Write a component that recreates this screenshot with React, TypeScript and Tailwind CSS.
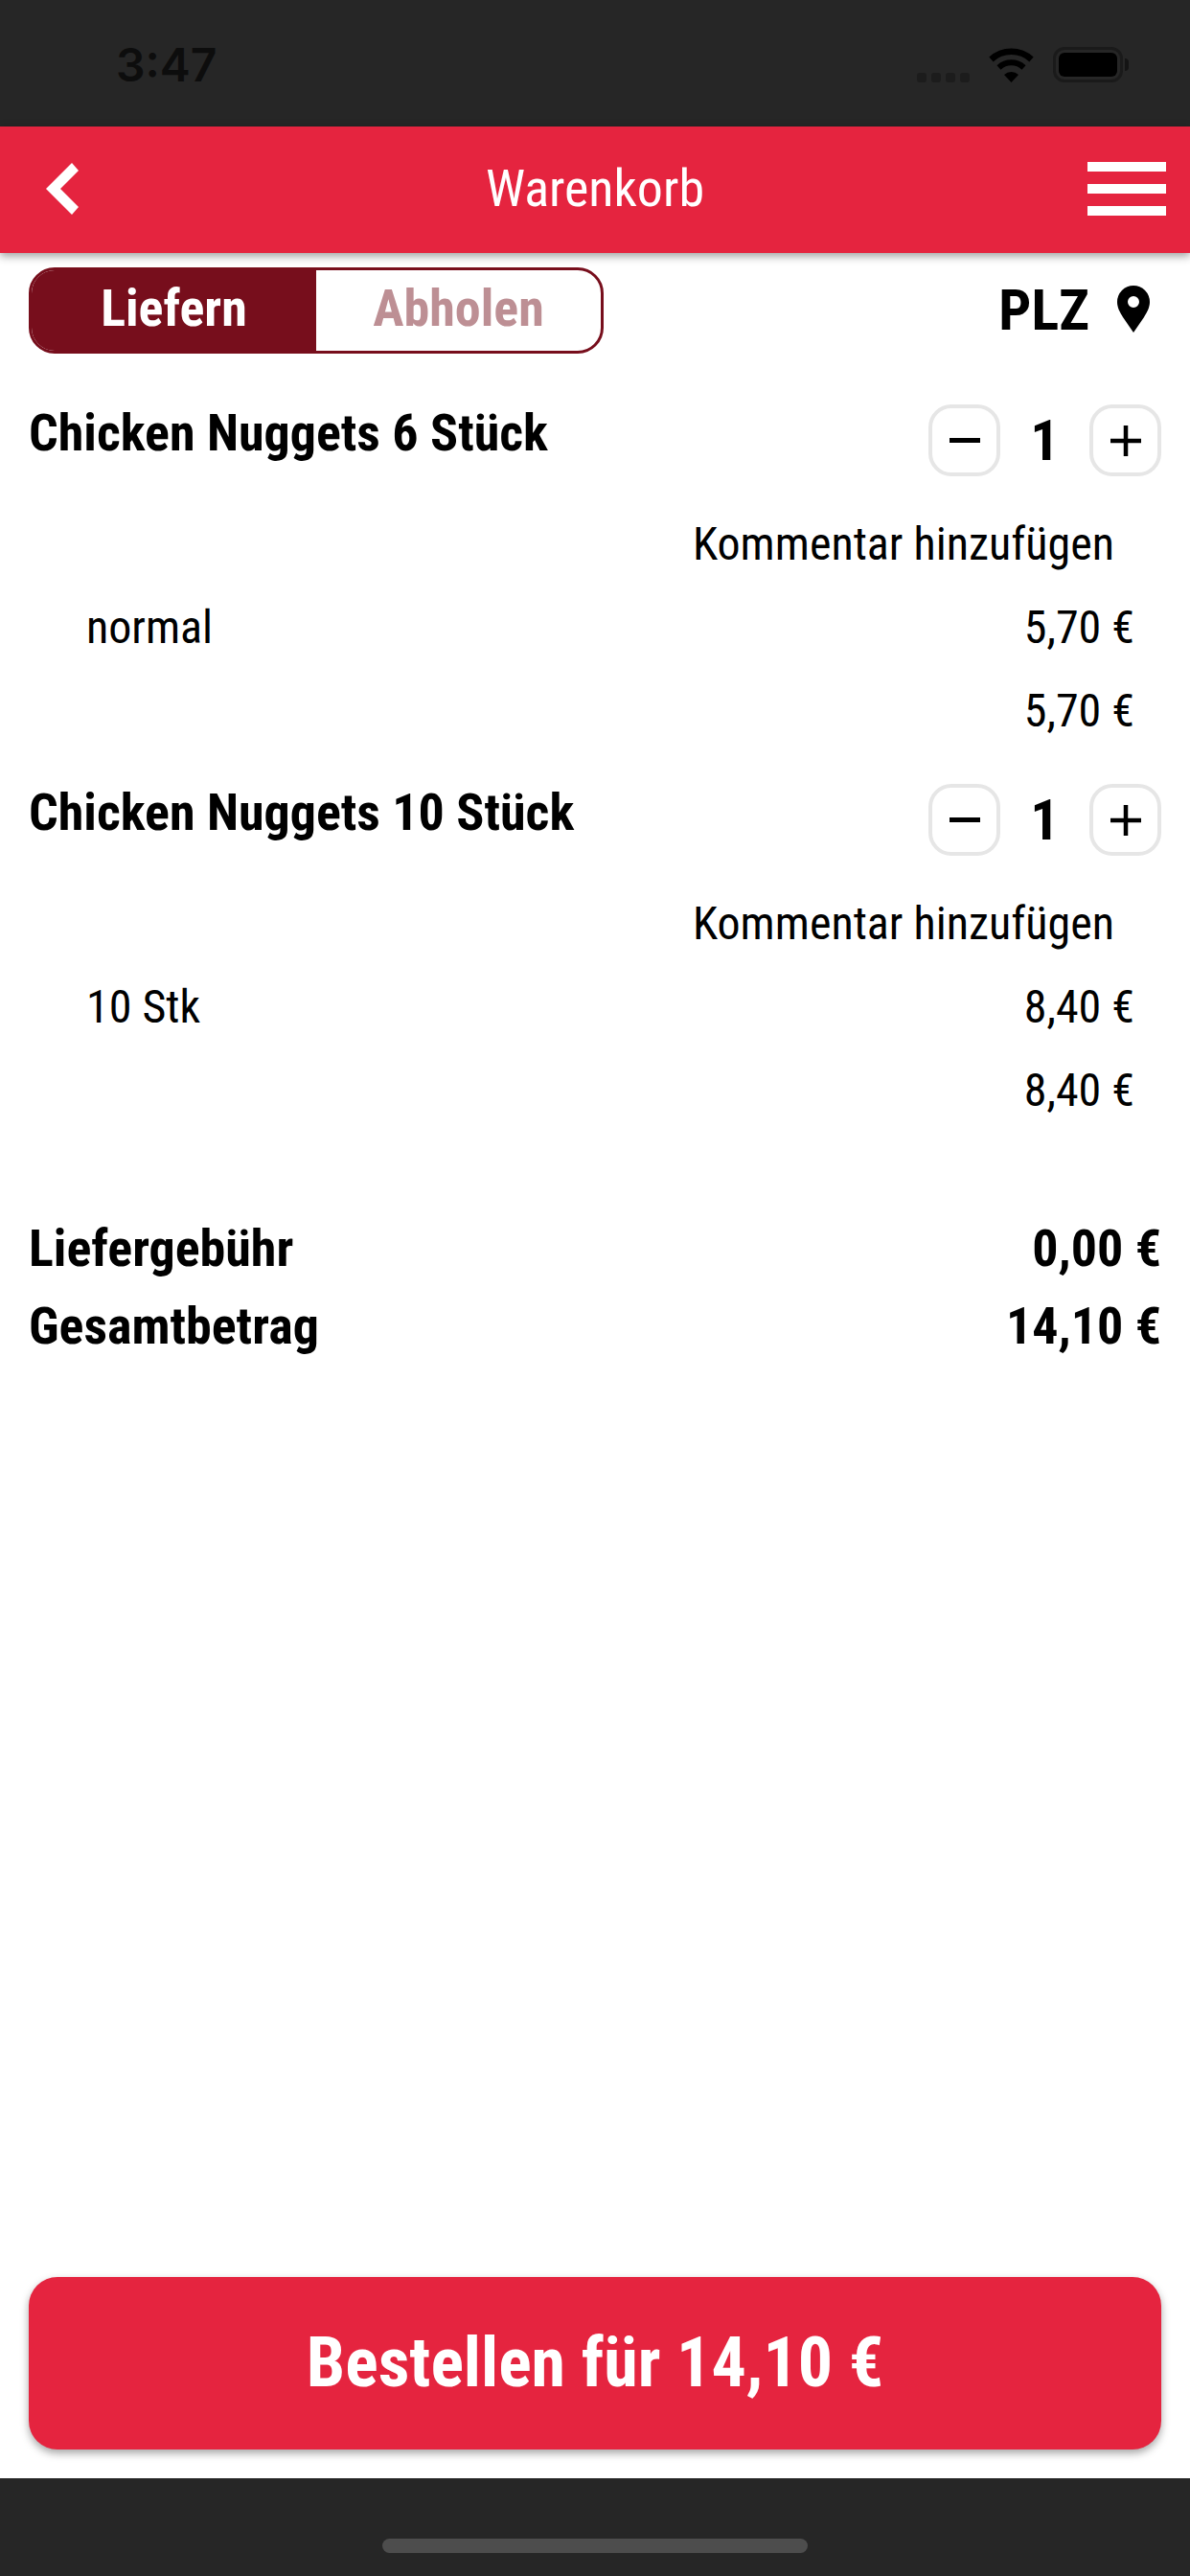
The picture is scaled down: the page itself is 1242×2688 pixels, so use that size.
const font = { fontFamily: '"Roboto", "Liberation Sans", sans-serif', fontStretch: '75%' };

function Stepper() {
  return (
    <div className="flex items-center">
      <button className="w-[75px] h-[75px] rounded-[24px] border-[4px] border-[#e6e6e6] flex items-center justify-center">
        <span className="w-[32px] h-[5px] bg-black" />
      </button>
      <span className="w-[93px] text-center text-[60px] leading-none font-bold">1</span>
      <button className="w-[75px] h-[75px] rounded-[24px] border-[4px] border-[#e6e6e6] flex items-center justify-center">
        <svg width="32" height="32" viewBox="0 0 32 32"><path d="M0 16h32M16 0v32" stroke="#000" strokeWidth="4.5" /></svg>
      </button>
    </div>
  );
}

function CartItem({ name, variant, price }: { name: string; variant: string; price: string }) {
  return (
    <div className="mb-[33px]">
      <div className="flex items-start justify-between px-[30px] h-[75px]">
        <h2 className="text-[54px] font-bold leading-[60px]">{name}</h2>
        <Stepper />
      </div>
      <div className="flex flex-col text-[48px] leading-[87px] pr-[58px] mt-[27px]">
        <div className="text-right pr-[21px]">Kommentar hinzufügen</div>
        <div className="flex justify-between pl-[90px]">
          <span>{variant}</span>
          <span>{price}</span>
        </div>
        <div className="text-right">{price}</div>
      </div>
    </div>
  );
}

export default function App() {
  return (
    <div className="w-[1242px] h-[2688px] flex flex-col bg-white text-black overflow-hidden" style={font}>
      {/* status bar */}
      <div className="h-[132px] bg-[#262626] flex items-start justify-between pl-[121px] pr-[64px] pt-[40px] shrink-0">
        <span className="text-[48px] leading-[56px] font-semibold text-[#0d0d0d]" style={{ fontFamily: 'Inter, sans-serif', fontStretch: '100%' }}>3:47</span>
        <div className="flex items-center mt-[9px]">
          <div className="flex gap-[5px] mt-[26px] mr-[20px]">
            <span className="w-[10px] h-[10px] rounded-[3px] bg-[#1c1c1c]" />
            <span className="w-[10px] h-[10px] rounded-[3px] bg-[#1c1c1c]" />
            <span className="w-[10px] h-[10px] rounded-[3px] bg-[#1c1c1c]" />
            <span className="w-[10px] h-[10px] rounded-[3px] bg-[#1c1c1c]" />
          </div>
          <svg width="47" height="36" viewBox="0 0 47 36" className="mr-[20px]">
            <path d="M23.5 36 L16 28 A11 11 0 0 1 31 28 Z" fill="#000" />
            <path d="M10.5 20.5 A19 19 0 0 1 36.5 20.5" fill="none" stroke="#000" strokeWidth="6" />
            <path d="M2.5 12 A31 31 0 0 1 44.5 12" fill="none" stroke="#000" strokeWidth="6.5" />
          </svg>
          <div className="flex items-center gap-[2px]">
            <div className="w-[73px] h-[37px] rounded-[12px] border-[3px] border-[#1a1a1a] p-[3px]">
              <div className="w-full h-full rounded-[6px] bg-black" />
            </div>
            <span className="w-[4px] h-[13px] bg-[#141414] rounded-r-full" />
          </div>
        </div>
      </div>

      {/* header */}
      <header className="relative z-10 h-[132px] bg-[#e5243f] flex items-center justify-between shrink-0 shadow-[0_3px_9px_rgba(0,0,0,0.4)]">
        <div className="w-[107px] pl-[48px]">
          <svg width="34" height="54" viewBox="0 0 34 54" className="block mt-[-3px]">
            <path d="M27 0 L34 8 L15 27 L34 46 L27 54 L0 27 Z" fill="#fff" />
          </svg>
        </div>
        <h1 className="text-[54px] text-white leading-none mt-[-2px]">Warenkorb</h1>
        <div className="w-[107px] pr-[25px] flex flex-col gap-[13px] mt-[-3px]">
          <span className="h-[10px] bg-white" />
          <span className="h-[10px] bg-white" />
          <span className="h-[10px] bg-white" />
        </div>
      </header>

      {/* delivery toggle */}
      <div className="flex items-center justify-between pl-[30px] pr-[42px] pt-[15px] shrink-0">
        <div className="w-[600px] h-[90px] rounded-[27px] border-[3px] border-[#770e1c] flex overflow-hidden text-[54px] font-bold">
          <div className="w-[297px] bg-[#770e1c] text-white flex items-center justify-center pb-[5px]">Liefern</div>
          <div className="flex-1 text-[#bd8f94] flex items-center justify-center pb-[5px]">Abholen</div>
        </div>
        <div className="flex items-center gap-[29px]">
          <span className="text-[60px] font-bold leading-none">PLZ</span>
          <svg width="34" height="49" viewBox="0 0 34 49" className="mt-[-3px]">
            <path fillRule="evenodd" d="M17 0a17 17 0 0 0-17 17c0 6 3 11 6 16L17 49l11-16c3-5 6-10 6-16A17 17 0 0 0 17 0zm0 23a6 6 0 1 1 0-12 6 6 0 0 1 0 12z" fill="#000" />
          </svg>
        </div>
      </div>

      {/* items */}
      <main className="flex-1 flex flex-col pt-[53px]">
        <CartItem name="Chicken Nuggets 6 Stück" variant="normal" price="5,70 €" />
        <CartItem name="Chicken Nuggets 10 Stück" variant="10 Stk" price="8,40 €" />

        <div className="px-[30px] mt-[48px] text-[54px] font-bold leading-[81px]">
          <div className="flex justify-between">
            <span>Liefergebühr</span>
            <span>0,00 €</span>
          </div>
          <div className="flex justify-between">
            <span>Gesamtbetrag</span>
            <span>14,10 €</span>
          </div>
        </div>

        <div className="mt-auto px-[30px] pb-[30px]">
          <button className="w-full h-[180px] rounded-[30px] bg-[#e5243f] text-white text-[72px] font-bold shadow-[0_4px_8px_rgba(0,0,0,0.35)]">
            Bestellen für 14,10 €
          </button>
        </div>
      </main>

      {/* home indicator */}
      <div className="h-[102px] bg-[#262626] flex justify-center pt-[63px] shrink-0">
        <span className="w-[444px] h-[15px] rounded-full bg-[#4d4d4d]" />
      </div>
    </div>
  );
}
